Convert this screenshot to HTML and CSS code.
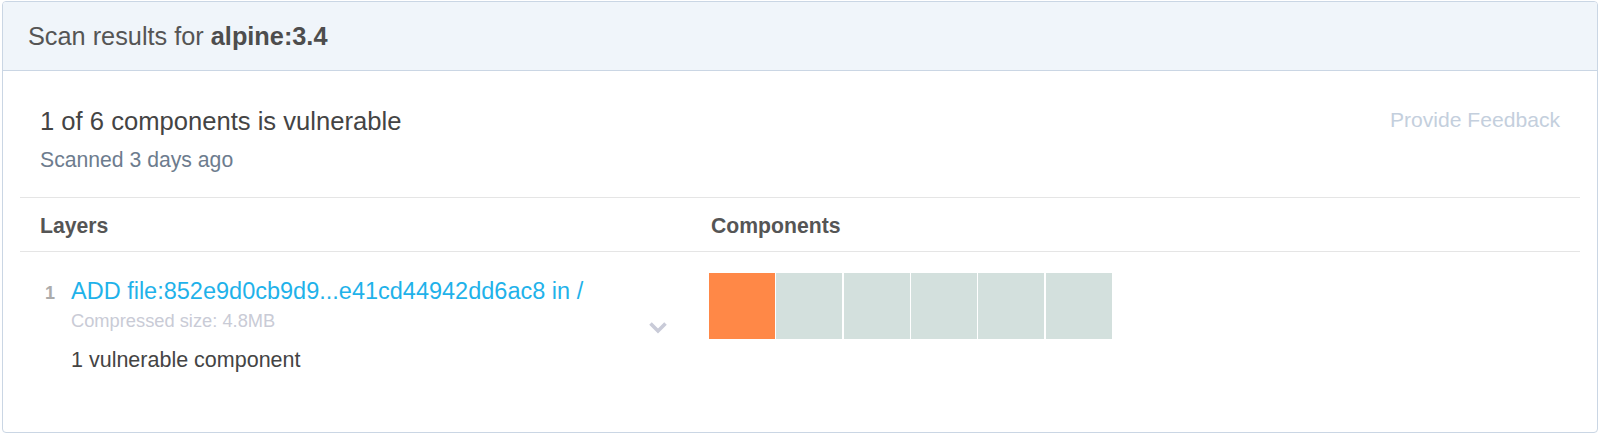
FILE: index.html
```html
<!DOCTYPE html>
<html lang="en">
<head>
<meta charset="utf-8">
<title>Scan results for alpine:3.4</title>
<link rel="stylesheet" href="styles.css">
</head>
<body>
<div class="page">
  <section class="card">
    <header class="card-header">
      <h1 class="title">Scan results for <strong>alpine:3.4</strong></h1>
    </header>
    <div class="card-body">
      <div class="summary">
        <div class="summary-text">
          <div class="summary-main">1 of 6 components is vulnerable</div>
          <div class="summary-sub">Scanned 3 days ago</div>
        </div>
        <a class="feedback" href="#">Provide Feedback</a>
      </div>
      <div class="table-head">
        <div class="th th-layers">Layers</div>
        <div class="th th-components">Components</div>
      </div>
      <div class="layer-row">
        <div class="layer-cell">
          <div class="layer-num">1</div>
          <div class="layer-info">
            <a class="layer-link" href="#">ADD file:852e9d0cb9d9...e41cd44942dd6ac8 in /</a>
            <div class="layer-size">Compressed size: 4.8MB</div>
            <div class="layer-vuln">1 vulnerable component</div>
          </div>
          <svg class="chevron" width="20" height="13" viewBox="0 0 20 13" aria-hidden="true">
            <polyline points="2.5,2.5 10,10 17.5,2.5" fill="none" stroke="#c9cbd8" stroke-width="3.6" stroke-linejoin="miter" stroke-linecap="butt"/>
          </svg>
        </div>
        <div class="comp-cell">
          <div class="boxes">
            <span class="box box-vuln"></span>
            <span class="box"></span>
            <span class="box"></span>
            <span class="box"></span>
            <span class="box"></span>
            <span class="box"></span>
          </div>
        </div>
      </div>
    </div>
  </section>
</div>
</body>
</html>
```

FILE: styles.css
```css
html, body {
  margin: 0;
  padding: 0;
  background: #ffffff;
}

body {
  font-family: "Liberation Sans", Arial, Helvetica, sans-serif;
  color: #444;
}

.page {
  padding: 1px 2px 1px 2px;
}

.card {
  box-sizing: border-box;
  height: 432px;
  border: 1px solid #cad6e4;
  border-radius: 4px;
  overflow: hidden;
  background: #fff;
}

.card-header {
  height: 68px;
  background: #f0f5fa;
  border-bottom: 1px solid #cad6e4;
  padding: 0 25px;
}

.title {
  margin: 0;
  font-size: 25.3px;
  line-height: 68px;
  font-weight: normal;
  color: #555;
}

.title strong {
  font-weight: bold;
  color: #4d4d4d;
}

.card-body {
  padding: 0 17px;
}

.summary {
  display: flex;
  justify-content: space-between;
  align-items: flex-start;
  padding: 35px 20px 24px 20px;
  border-bottom: 1px solid #e5e5e5;
}

.summary-main {
  font-size: 25.6px;
  line-height: 30px;
  color: #444;
}

.summary-sub {
  margin-top: 11px;
  font-size: 21.2px;
  line-height: 26px;
  color: #6d7c8e;
}

.feedback {
  margin-top: 1px;
  font-size: 21.1px;
  line-height: 26px;
  color: #c4cfdd;
  text-decoration: none;
}

.table-head {
  display: grid;
  grid-template-columns: 689px 1fr;
  border-bottom: 1px solid #e5e5e5;
  padding-top: 2px;
}

.th {
  font-size: 21.2px;
  line-height: 51px;
  font-weight: bold;
  color: #555;
}

.th-layers {
  padding-left: 20px;
}

.th-components {
  padding-left: 2px;
}

.layer-row {
  display: grid;
  grid-template-columns: 689px 1fr;
}

.layer-cell {
  display: flex;
  align-items: baseline;
  padding: 25px 0 0 20px;
}

.layer-num {
  box-sizing: border-box;
  width: 31px;
  padding-left: 5px;
  font-size: 18px;
  line-height: 28px;
  font-weight: bold;
  color: #ababab;
}

.layer-info {
  flex: 1;
  display: flex;
  flex-direction: column;
  align-items: flex-start;
}

.layer-link {
  font-size: 23.5px;
  line-height: 28px;
  color: #1fb2ea;
  text-decoration: none;
}

.layer-size {
  margin-top: 5px;
  font-size: 18.3px;
  line-height: 22px;
  color: #c9cbd6;
}

.layer-vuln {
  margin-top: 13px;
  font-size: 21.5px;
  line-height: 30px;
  color: #444;
}

.chevron {
  align-self: flex-start;
  margin-top: 44px;
  margin-right: 41px;
}

.comp-cell {
  padding-top: 21px;
}

.boxes {
  display: flex;
  gap: 1.33px;
}

.box {
  display: block;
  width: 66px;
  height: 66px;
  background: #d3e0dd;
}

.box-vuln {
  background: #ff8847;
}
```
